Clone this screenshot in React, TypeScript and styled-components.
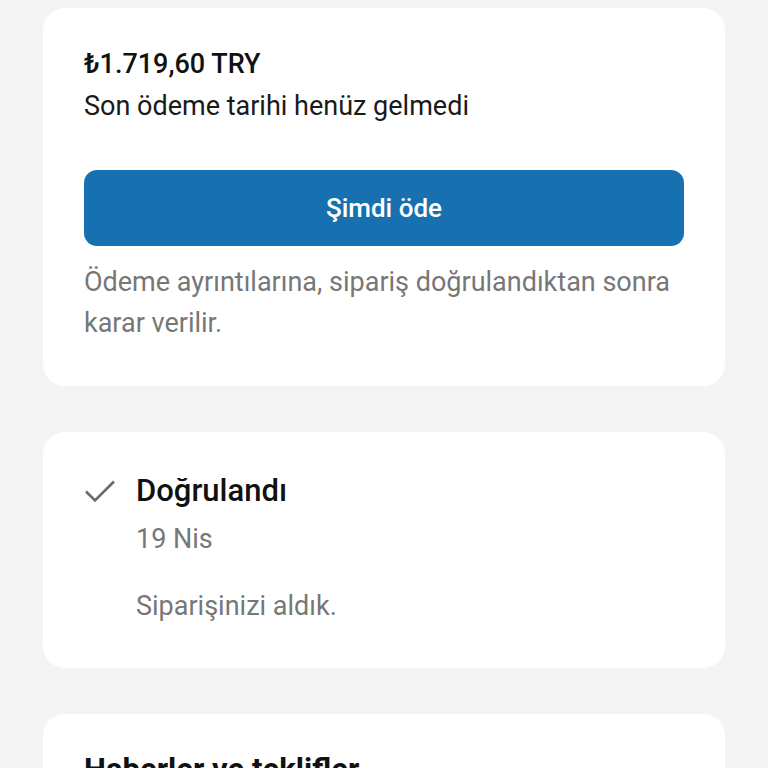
import React from 'react'
import { styled, createGlobalStyle } from 'styled-components'

const Global = createGlobalStyle`
  html, body {
    margin: 0;
    padding: 0;
    background: #f4f4f4;
    font-family: Roboto, 'Noto Sans', sans-serif;
  }
`

const App: React.FC = () => {
  return (
    <Page>
      <Global />
      <Card $pad="38px 41px 42px">
        <Amount>₺1.719,60 TRY</Amount>
        <Subtitle>Son ödeme tarihi henüz gelmedi</Subtitle>
        <PayButton>Şimdi öde</PayButton>
        <Note>Ödeme ayrıntılarına, sipariş doğrulandıktan sonra karar verilir.</Note>
      </Card>
      <Card $pad="39px 41px 44px">
        <StatusRow>
          <CheckIcon viewBox="0 0 32 24">
            <path d="M2 12.5 L11 21.5 L30 2.5" fill="none" stroke="#6b6b6b" strokeWidth="2.6" />
          </CheckIcon>
          <StatusBody>
            <StatusTitle>Doğrulandı</StatusTitle>
            <Muted>19 Nis</Muted>
            <StatusText>Siparişinizi aldık.</StatusText>
          </StatusBody>
        </StatusRow>
      </Card>
      <Card $pad="36px 41px 42px">
        <SectionTitle>Haberler ve teklifler</SectionTitle>
      </Card>
    </Page>
  )
}

const Page = styled.div`
  display: flex;
  flex-direction: column;
  gap: 46px;
  padding: 8px 43px 40px;
`

const Card = styled.div<{ $pad: string }>`
  background: #fff;
  border-radius: 22px;
  padding: ${(p) => p.$pad};
  display: flex;
  flex-direction: column;
`

const Amount = styled.div`
  font-size: 27px;
  font-weight: 500;
  color: #111;
  line-height: 36px;
`

const Subtitle = styled.div`
  font-size: 27px;
  color: #1a1a1a;
  line-height: 36px;
  margin-top: 6px;
`

const PayButton = styled.button`
  margin-top: 46px;
  height: 76px;
  border: none;
  border-radius: 13px;
  background: #1771b0;
  color: #fff;
  font-family: Roboto, sans-serif;
  font-size: 26px;
  font-weight: 500;
  cursor: pointer;
`

const Note = styled.div`
  margin-top: 16px;
  font-size: 27px;
  line-height: 41px;
  color: #777;
`

const StatusRow = styled.div`
  display: flex;
  gap: 20px;
  align-items: flex-start;
`

const CheckIcon = styled.svg`
  width: 32px;
  height: 24px;
  margin-top: 8px;
  flex-shrink: 0;
`

const StatusBody = styled.div`
  display: flex;
  flex-direction: column;
`

const StatusTitle = styled.div`
  font-size: 31px;
  font-weight: 500;
  color: #111;
  line-height: 40px;
`

const Muted = styled.div`
  font-size: 27px;
  color: #777;
  line-height: 36px;
  margin-top: 10px;
`

const StatusText = styled(Muted)`
  margin-top: 31px;
`

const SectionTitle = styled.div`
  font-size: 31px;
  font-weight: 700;
  color: #111;
  line-height: 40px;
`

export default App
